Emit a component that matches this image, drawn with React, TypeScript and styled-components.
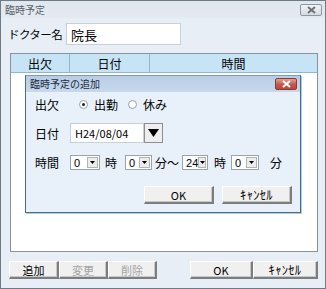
import React from 'react';
import styled, { createGlobalStyle } from 'styled-components';

const Global = createGlobalStyle`
  html, body { margin: 0; padding: 0; background: #fff; }
  body { font-family: "Noto Sans CJK JP", "Liberation Sans", sans-serif; }
  * { box-sizing: border-box; }
`;

const Window = styled.div`
  position: relative;
  width: 326px;
  height: 289px;
  border: 1px solid #6f7a86;
  background: #e8eef5;
  display: flex;
  flex-direction: column;
  font-size: 12px;
  color: #000;
`;

const TitleBar = styled.div<{ $active?: boolean }>`
  height: ${p => (p.$active ? '16px' : '17px')};
  flex: none;
  display: flex;
  align-items: center;
  justify-content: space-between;
  padding: 0 3px 0 4px;
  font-size: 10px;
  line-height: 1;
  color: ${p => (p.$active ? '#1b2a3a' : '#5a5f66')};
  background: ${p =>
    p.$active ? 'linear-gradient(#b8cde5, #c7d8ec)' : 'linear-gradient(#dfe7ef, #e3eaf2)'};
`;

const CloseBtn = styled.div<{ $red?: boolean }>`
  width: 22px;
  height: 12px;
  border-radius: 2px;
  border: 1px solid ${p => (p.$red ? '#8c3a32' : '#8d959e')};
  background: ${p =>
    p.$red ? 'linear-gradient(#e0a193, #c5574a 55%, #b84a3c)' : 'linear-gradient(#f2f4f7, #d6dce2)'};
  display: flex;
  align-items: center;
  justify-content: center;
`;

const Content = styled.div`
  flex: 1;
  display: flex;
  flex-direction: column;
  padding: 0 7px 0 7px;
`;

const DoctorRow = styled.div`
  margin-top: 5px;
  height: 22px;
  display: flex;
  align-items: center;
`;

const DoctorLabel = styled.div`
  width: 58px;
  font-size: 11.5px;
  letter-spacing: -0.6px;
  white-space: nowrap;
`;

const TextBox = styled.div<{ $w: number; $h: number; $fs?: number }>`
  width: ${p => p.$w}px;
  height: ${p => p.$h}px;
  background: #fff;
  border: 1px solid #c7d0d8;
  display: flex;
  align-items: center;
  padding-left: 4px;
  font-size: ${p => p.$fs ?? 13}px;
`;

const Table = styled.div`
  margin: 8px 0 0 2px;
  height: 199px;
  border: 1px solid #8a939c;
  background: #fff;
  display: flex;
  flex-direction: column;
`;

const HeaderRow = styled.div`
  height: 19px;
  display: flex;
  background: #c6e4f6;
  border-bottom: 1px solid #8fb7d2;
`;

const HeaderCell = styled.div<{ $w?: number }>`
  ${p => (p.$w ? `width: ${p.$w}px;` : 'flex: 1;')}
  display: flex;
  align-items: center;
  justify-content: center;
  border-right: 1px solid #8fb7d2;
  font-size: 12px;
  &:last-child { border-right: none; }
`;

const ButtonRow = styled.div`
  margin-top: 9px;
  display: flex;
  justify-content: space-between;
`;

const ButtonGroup = styled.div<{ $ml?: number }>`
  display: flex;
  margin-left: ${p => p.$ml ?? 0}px;
`;

const Button = styled.div<{ $w: number; $h?: number; $disabled?: boolean }>`
  width: ${p => p.$w}px;
  height: ${p => p.$h ?? 18}px;
  display: flex;
  align-items: center;
  justify-content: center;
  font-size: 11px;
  color: ${p => (p.$disabled ? '#a3a3a3' : '#000')};
  background: #f0f0f0;
  border-style: solid;
  border-width: 1px 2px 2px 1px;
  border-color: #ffffff #7d7d7d #7d7d7d #ffffff;
  box-shadow: inset -1px -1px 0 #c8c8c8;
`;

const HalfKana = styled.span`
  font-size: 12.5px;
  letter-spacing: 0.3px;
`;

const Dialog = styled.div`
  position: absolute;
  left: 24px;
  top: 74px;
  width: 276px;
  height: 138px;
  border: 1px solid #41708f;
  border-top-color: #7d9bb8;
  background: #e8f1f9;
  display: flex;
  flex-direction: column;
  box-shadow: 1px 1px 0 #b8c8d6;
`;

const DialogBody = styled.div`
  display: flex;
  flex-direction: column;
  padding: 0 8px 0 9px;
`;

const FormRow = styled.div<{ $mt: number; $h: number }>`
  margin-top: ${p => p.$mt}px;
  height: ${p => p.$h}px;
  display: flex;
  align-items: center;
`;

const FieldLabel = styled.div`
  width: 35px;
  flex: none;
  font-size: 12px;
`;

const RadioGroup = styled.div`
  margin-left: 9px;
  display: flex;
  align-items: center;
`;

const RadioItem = styled.div<{ $w: number }>`
  width: ${p => p.$w}px;
  display: flex;
  align-items: center;
  gap: 6px;
  font-size: 12px;
`;

const RadioCircle = styled.div<{ $checked?: boolean }>`
  width: 9px;
  height: 9px;
  border-radius: 50%;
  border: 1px solid #9aa3ab;
  background: #fff;
  display: flex;
  align-items: center;
  justify-content: center;
  &::after {
    content: '';
    width: 3px;
    height: 3px;
    border-radius: 50%;
    background: ${p => (p.$checked ? '#222' : 'transparent')};
  }
`;

const DropButton = styled.div`
  width: 19px;
  height: 20px;
  background: #eeeeee;
  border: 1px solid #8e8e8e;
  display: flex;
  align-items: center;
  justify-content: center;
`;

const Select = styled.div<{ $w: number; $ml: number }>`
  margin-left: ${p => p.$ml}px;
  width: ${p => p.$w}px;
  height: 15px;
  background: #fff;
  border: 1px solid #9aa4ad;
  display: flex;
  align-items: center;
  font-size: 11px;
  font-family: "Liberation Sans", sans-serif;
`;

const SelectValue = styled.div`
  flex: 1;
  padding-left: 3px;
`;

const SelectArrow = styled.div`
  width: 11px;
  height: 11px;
  margin-right: 1px;
  background: #ececec;
  border: 1px solid #b3b3b3;
  display: flex;
  align-items: center;
  justify-content: center;
`;

const Unit = styled.div<{ $ml: number }>`
  margin-left: ${p => p.$ml}px;
  font-size: 12px;
`;

const DialogButtons = styled.div`
  margin-top: 16px;
  display: flex;
  justify-content: flex-end;
  gap: 8px;
`;

const XIcon = ({ color }: { color: string }) => (
  <svg width="9" height="8" viewBox="0 0 9 8">
    <path d="M1 1 L8 7 M8 1 L1 7" stroke={color} strokeWidth="2" />
  </svg>
);

const SmallArrow = () => (
  <svg width="5" height="3" viewBox="0 0 5 3">
    <path d="M0 0 H5 L2.5 3 Z" fill="#000" />
  </svg>
);

const BigArrow = () => (
  <svg width="11" height="8" viewBox="0 0 11 8">
    <path d="M0 0 H11 L5.5 8 Z" fill="#000" />
  </svg>
);

const TimeSelect = ({ value, w, ml }: { value: string; w: number; ml: number }) => (
  <Select $w={w} $ml={ml}>
    <SelectValue>{value}</SelectValue>
    <SelectArrow>
      <SmallArrow />
    </SelectArrow>
  </Select>
);

export default function App() {
  return (
    <>
      <Global />
      <Window>
        <TitleBar>
          <span>臨時予定</span>
          <CloseBtn>
            <XIcon color="#6b7178" />
          </CloseBtn>
        </TitleBar>
        <Content>
          <DoctorRow>
            <DoctorLabel>ドクター名</DoctorLabel>
            <TextBox $w={115} $h={22}>院長</TextBox>
          </DoctorRow>
          <Table>
            <HeaderRow>
              <HeaderCell $w={59}>出欠</HeaderCell>
              <HeaderCell $w={80}>日付</HeaderCell>
              <HeaderCell>時間</HeaderCell>
            </HeaderRow>
          </Table>
          <ButtonRow>
            <ButtonGroup $ml={1}>
              <Button $w={50}>追加</Button>
              <Button $w={49} $disabled>変更</Button>
              <Button $w={49} $disabled>削除</Button>
            </ButtonGroup>
            <ButtonGroup>
              <Button $w={63}>OK</Button>
              <Button $w={65}><HalfKana>ｷｬﾝｾﾙ</HalfKana></Button>
            </ButtonGroup>
          </ButtonRow>
        </Content>

        <Dialog>
          <TitleBar $active>
            <span>臨時予定の追加</span>
            <CloseBtn $red>
              <XIcon color="#ffffff" />
            </CloseBtn>
          </TitleBar>
          <DialogBody>
            <FormRow $mt={2} $h={20}>
              <FieldLabel>出欠</FieldLabel>
              <RadioGroup>
                <RadioItem $w={49}>
                  <RadioCircle $checked />
                  出勤
                </RadioItem>
                <RadioItem $w={40}>
                  <RadioCircle />
                  休み
                </RadioItem>
              </RadioGroup>
            </FormRow>
            <FormRow $mt={9} $h={20}>
              <FieldLabel>日付</FieldLabel>
              <TextBox $w={74} $h={20} $fs={11}>H24/08/04</TextBox>
              <DropButton>
                <BigArrow />
              </DropButton>
            </FormRow>
            <FormRow $mt={12} $h={15}>
              <FieldLabel>時間</FieldLabel>
              <TimeSelect value="0" w={30} ml={0} />
              <Unit $ml={5}>時</Unit>
              <TimeSelect value="0" w={27} ml={8} />
              <Unit $ml={3}>分～</Unit>
              <TimeSelect value="24" w={26} ml={3} />
              <Unit $ml={6}>時</Unit>
              <TimeSelect value="0" w={28} ml={5} />
              <Unit $ml={11}>分</Unit>
            </FormRow>
            <DialogButtons>
              <Button $w={70} $h={18}>OK</Button>
              <Button $w={70} $h={18}><HalfKana>ｷｬﾝｾﾙ</HalfKana></Button>
            </DialogButtons>
          </DialogBody>
        </Dialog>
      </Window>
    </>
  );
}
